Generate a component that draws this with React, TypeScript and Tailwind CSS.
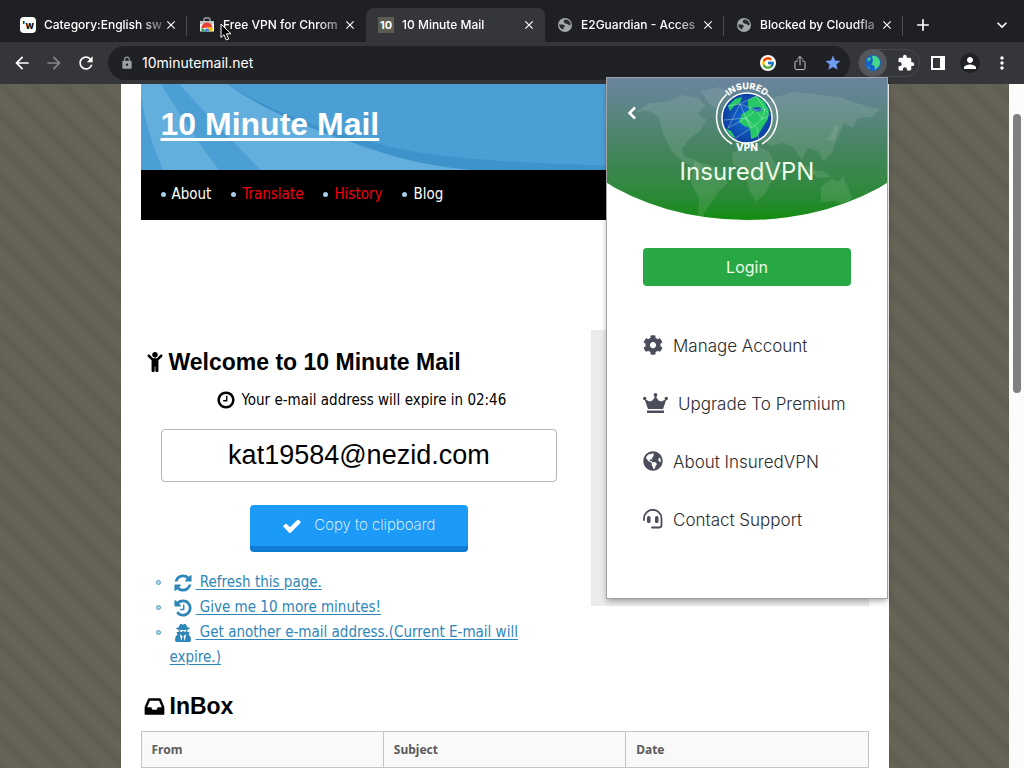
import { useState } from "react";
import type { ReactNode } from "react";
import { FaChild, FaCog, FaGlobeAmericas, FaUserSecret } from "react-icons/fa";
import { FcGoogle } from "react-icons/fc";
import { IoShareOutline } from "react-icons/io5";
import {
  MdAdd,
  MdArrowBack,
  MdArrowForward,
  MdClose,
  MdExpandMore,
  MdExtension,
  MdLock,
  MdMoreVert,
  MdPerson,
  MdRefresh,
  MdStar,
} from "react-icons/md";

type GlyphProps = { d: string; className: string };

// icons on a 1792 grid
const Glyph = ({ d, className }: GlyphProps) => (
  <svg viewBox="0 0 1792 1792" fill="currentColor" className={className} aria-hidden="true">
    <path d={d} />
  </svg>
);

const clockPath =
  "M1024 544v448q0 14-9 23t-23 9h-320q-14 0-23-9t-9-23v-64q0-14 9-23t23-9h224v-352q0-14 9-23t23-9h64q14 0 23 9t9 23zm416 352q0-148-73-273t-198-198-273-73-273 73-198 198-73 273 73 273 198 198 273 73 273-73 198-198 73-273zm224 0q0 209-103 385.5t-279.5 279.5-385.5 103-385.5-103-279.5-279.5-103-385.5 103-385.5 279.5-279.5 385.5-103 385.5 103 279.5 279.5 103 385.5z";
const checkPath =
  "M1671 566q0 40-28 68l-724 724-136 136q-28 28-68 28t-68-28l-136-136-362-362q-28-28-28-68t28-68l136-136q28-28 68-28t68 28l294 295 656-657q28-28 68-28t68 28l136 136q28 28 28 68z";
const inboxPath =
  "M1151 960h316q-1-3-2.5-8.5t-2.5-7.5l-212-496h-708l-212 496q-1 3-2.5 8.5t-2.5 7.5h316l95 192h320zm513 30v482q0 26-19 45t-45 19h-1408q-26 0-45-19t-19-45v-482q0-62 25-123l238-552q10-25 36.5-42t52.5-17h832q26 0 52.5 17t36.5 42l238 552q25 61 25 123z";
const refreshPath =
  "M1639 1056q0 5-1 7-64 268-268 434.5t-478 166.5q-146 0-282.5-55t-243.5-157l-129 129q-19 19-45 19t-45-19-19-45v-448q0-26 19-45t45-19h448q26 0 45 19t19 45-19 45l-137 137q71 66 161 102t187 36q134 0 250-65t186-179q11-17 53-117 8-23 30-23h192q13 0 22.5 9.5t9.5 22.5zm25-800v448q0 26-19 45t-45 19h-448q-26 0-45-19t-19-45 19-45l138-138q-148-137-349-137-134 0-250 65t-186 179q-11 17-53 117-8 23-30 23h-199q-13 0-22.5-9.5t-9.5-22.5v-7q65-268 270-434.5t480-166.5q146 0 284 55.5t245 156.5l130-129q19-19 45-19t45 19 19 45z";
const historyPath =
  "M1664 896q0 156-61 298t-164 245-245 164-298 61q-172 0-327-72.5t-264-204.5q-7-10-6.5-22.5t8.5-20.5l137-138q10-9 25-9 16 2 23 12 73 95 179 147t225 52q104 0 198.5-40.5t163.5-109.5 109.5-163.5 40.5-198.5-40.5-198.5-109.5-163.5-163.5-109.5-198.5-40.5q-98 0-188 35.5t-160 101.5l137 138q31 30 14 69-17 40-59 40h-448q-26 0-45-19t-19-45v-448q0-42 40-59 39-17 69 14l130 129q107-101 244.5-156.5t284.5-55.5q156 0 298 61t245 164 164 245 61 298zm-640-288v448q0 14-9 23t-23 9h-320q-14 0-23-9t-9-23v-64q0-14 9-23t23-9h224v-352q0-14 9-23t23-9h64q14 0 23 9t9 23z";

const StoreIcon = () => (
  <svg viewBox="0 0 16 16" className="size-4" aria-hidden="true">
    <path d="M5 4V2.500Q5 1 6.500 1h3Q11 1 11 2.500V4" fill="none" stroke="#9aa0a6" strokeWidth="1.400" />
    <path d="M1 4h14v10.500H1z" fill="#f1f3f4" />
    <path d="M1 4h14v3H1z" fill="#c3c7cb" />
    <path d="M2.500 11.500a5.500 5.500 0 0 1 11-1H8z" fill="#ea4335" />
    <path d="M2.500 14.500a5.500 5.500 0 0 1 .5-4l4 4z" fill="#34a853" />
    <path d="M8 10.500h5.500q.5 2.200-.5 4H8z" fill="#fbbc04" />
    <path d="M5.800 14.500a2.300 2.300 0 1 1 4.400 0z" fill="#4285f4" />
  </svg>
);

const SiteIcon = () => (
  <svg viewBox="0 0 16 16" className="size-4" aria-hidden="true">
    <circle cx="8" cy="8" r="7" fill="#a3a6aa" />
    <path d="M7 3q3-1.500 6 2 1 2 .5 3-2 .5-3-1L8 6.500Q6 5 7 3z" fill="#2b2c30" />
    <path d="M2 7.500h4q2 .5 2 2.500H6.500v2.500Q3 12 2 7.500z" fill="#2b2c30" />
  </svg>
);

type TabProps = { icon: ReactNode; title: string; active?: boolean; divider?: boolean };

const Tab = ({ icon, title, active, divider }: TabProps) => (
  <div
    className={
      active
        ? "relative flex h-full min-w-0 flex-1 items-center rounded-t-lg bg-[#35363a] pr-2 pl-3"
        : "relative flex h-full min-w-0 flex-1 items-center pr-2 pl-3"
    }
  >
    <span className="flex size-4 shrink-0 items-center justify-center">{icon}</span>
    <span className="ml-2 min-w-0 flex-1 text-xs font-medium whitespace-nowrap text-white [mask-image:linear-gradient(to_right,#000_80%,#0004)]">
      {title}
    </span>
    <button type="button" aria-label="Close tab" className="flex size-4 shrink-0 items-center justify-center text-white">
      <MdClose className="size-3.5" />
    </button>
    {divider && <span className="absolute top-2 right-0 h-5 w-px bg-[#4a4c50]" />}
  </div>
);

const TabStrip = () => (
  <div className="flex h-[42px] bg-[#1f2024] pt-2 pl-2">
    <div className="flex min-w-0 flex-[0_1_895px]">
      <Tab
        divider
        title="Category:English sw"
        icon={
          <span className="flex size-4 items-center justify-center rounded-sm bg-white text-[10px] font-bold text-black">
            &#39;w
          </span>
        }
      />
      <Tab title="Free VPN for Chrom" icon={<StoreIcon />} />
      <Tab
        active
        title="10 Minute Mail"
        icon={
          <span className="flex size-4 items-center justify-center bg-[#5d5c50] text-[11px] font-bold text-white">10</span>
        }
      />
      <Tab divider title="E2Guardian - Acces" icon={<SiteIcon />} />
      <Tab divider title="Blocked by Cloudfla" icon={<SiteIcon />} />
    </div>
    <button type="button" aria-label="New tab" className="flex w-10 items-center justify-center text-white">
      <MdAdd className="size-5" />
    </button>
    <button type="button" aria-label="Search tabs" className="mr-3 ml-auto flex w-5 items-center justify-center text-white">
      <MdExpandMore className="size-5" />
    </button>
  </div>
);

const Toolbar = () => (
  <div className="flex h-[42px] items-center bg-[#35363a] pr-3 pl-3 text-white">
    <div className="flex w-24 gap-3">
      <button type="button" aria-label="Back">
        <MdArrowBack className="size-5" />
      </button>
      <button type="button" aria-label="Forward" className="text-[#85878b]">
        <MdArrowForward className="size-5" />
      </button>
      <button type="button" aria-label="Reload">
        <MdRefresh className="size-5" />
      </button>
    </div>
    <div className="flex h-[34px] min-w-0 flex-1 items-center rounded-full bg-[#202124] pr-2 pl-3">
      <MdLock className="size-3.5 shrink-0 text-[#9aa0a6]" />
      <input
        type="text"
        aria-label="Address"
        defaultValue="10minutemail.net"
        className="ml-2 min-w-0 flex-1 bg-transparent text-sm text-white outline-none"
      />
      <div className="flex items-center gap-4">
        <span className="flex size-4 items-center justify-center rounded-full bg-white">
          <FcGoogle className="size-3.5" />
        </span>
        <button type="button" aria-label="Share" className="text-[#c4c7c9]">
          <IoShareOutline className="size-4" />
        </button>
        <button type="button" aria-label="Bookmark" className="text-[#6f9bf5]">
          <MdStar className="size-[18px]" />
        </button>
      </div>
    </div>
    <div className="ml-2 flex h-7 items-center gap-2.5 rounded-full border border-[#47484c] pr-1">
      <button type="button" aria-label="InsuredVPN" className="flex size-7 items-center justify-center rounded-full bg-[#55575b]">
        <svg viewBox="0 0 16 16" className="size-4" aria-hidden="true">
          <circle cx="8" cy="8" r="8" fill="#1663c7" />
          <path d="M7 1q5-1 7.500 4 2 5-2.500 8l-2 2-.5-4-3-1.500L8 6z" fill="#45d68a" />
          <path d="M2 4l3-2 1 2-3 3zM2 11l3 2-1 1z" fill="#3cc4a0" />
        </svg>
      </button>
      <button type="button" aria-label="Extensions">
        <MdExtension className="size-[18px]" />
      </button>
    </div>
    <button type="button" aria-label="Side panel" className="ml-2 flex size-5 items-center justify-center">
      <svg viewBox="0 0 14 14" className="size-3.5" aria-hidden="true">
        <path d="M1 1h12v12H1z" fill="none" stroke="currentColor" strokeWidth="2" />
        <path d="M9 1h4v12H9z" fill="currentColor" />
      </svg>
    </button>
    <button type="button" aria-label="Profile" className="ml-3 flex size-5 items-center justify-center rounded-full bg-[#202124]">
      <MdPerson className="size-[18px]" />
    </button>
    <button type="button" aria-label="Menu" className="ml-3 flex w-5 justify-center">
      <MdMoreVert className="size-5" />
    </button>
  </div>
);

const navLinks = [
  { label: "About", className: "text-white" },
  { label: "Translate", className: "text-[#f00010]" },
  { label: "History", className: "text-[#f00010]" },
  { label: "Blog", className: "text-white" },
];

const SiteHeader = () => (
  <header>
    <div className="relative h-[86px] overflow-hidden bg-[#4c9fd5]">
      <svg viewBox="0 0 728 86" preserveAspectRatio="none" className="absolute inset-0 size-full" aria-hidden="true">
        <path d="M0 0h20q30 50 58 86H22Q6 50 0 12z" fill="#62aedd" />
        <path d="M38 0h48q60 38 160 66 60 15 120 20H120Q80 46 38 0z" fill="#62aedd" />
        <path d="M86 0q60 38 160 62 60 16 240 20v4H330q-60-5-120-28Q130 32 86 0z" fill="#3f93cb" />
      </svg>
      <h1 className="relative px-5 pt-[18px] text-[32px] leading-11 font-bold text-white">
        <a href="#" className="underline decoration-3 underline-offset-3">
          10 Minute Mail
        </a>
      </h1>
    </div>
    <nav className="flex h-[50px] items-start gap-5 bg-black px-5 pt-3 font-['DejaVu_Sans_Condensed','Noto_Sans',sans-serif] text-[15px] leading-6">
      {navLinks.map((link) => (
        <a key={link.label} href="#" className={link.className}>
          <span className="mr-1.5 inline-block size-[5px] rounded-full bg-[#a5cbe6] align-middle" />
          {link.label}
        </a>
      ))}
    </nav>
  </header>
);

const actions = [
  { label: "Refresh this page.", icon: <Glyph d={refreshPath} className="inline size-5 align-middle" /> },
  { label: "Give me 10 more minutes!", icon: <Glyph d={historyPath} className="inline size-5 align-middle" /> },
  {
    label: "Get another e-mail address.(Current E-mail will expire.)",
    icon: <FaUserSecret className="inline h-[18px] w-5 align-middle" />,
  },
];

const MailBox = () => {
  const [address] = useState("kat19584@nezid.com");

  return (
    <section className="w-3/5">
      <h2 className="flex h-16 items-center gap-1 pl-1 text-[23px] font-bold">
        <FaChild className="size-5" />
        Welcome to 10 Minute Mail
      </h2>
      <p className="flex h-3 items-center justify-center gap-1.5 pl-1 font-['DejaVu_Sans_Condensed','Noto_Sans',sans-serif] text-[15px]">
        <Glyph d={clockPath} className="size-5" />
        Your e-mail address will expire in 02:46
      </p>
      <div className="px-5 pt-[23px]">
        <input
          type="text"
          readOnly
          aria-label="E-mail address"
          value={address}
          className="h-[53px] w-full rounded-sm border border-[#b5b5b5] bg-white text-center text-[27px] text-black"
        />
      </div>
      <button
        type="button"
        className="mx-auto mt-[23px] flex h-[47px] w-1/2 items-center justify-center gap-3 rounded-sm border-b-6 border-[#0f7bd4] bg-[#1c9af8] font-['Inter',sans-serif] text-[15px] font-extralight text-white"
      >
        <Glyph d={checkPath} className="size-5" />
        Copy to clipboard
      </button>
      <ul className="mt-[18px] pl-[29px] font-['DejaVu_Sans_Condensed','Noto_Sans',sans-serif] text-[15px] leading-[25px] text-[#2e86b9]">
        {actions.map((action) => (
          <li key={action.label} className="relative pr-12">
            <span className="absolute top-2.5 -left-3.5 size-[5px] rounded-full border border-[#4f9fc4] bg-[#b5d7e8]" />
            <a href="#" className="underline underline-offset-2">
              <span className="mx-[3px] inline-block align-top">{action.icon}</span>
              &nbsp;{action.label}
            </a>
          </li>
        ))}
      </ul>
    </section>
  );
};

const Inbox = () => (
  <section>
    <h2 className="mt-3 flex h-[49px] items-center gap-1 pl-0.5 text-[23px] font-bold">
      <Glyph d={inboxPath} className="size-[23px]" />
      InBox
    </h2>
    <table className="w-full table-fixed border-collapse border border-[#c4c4c4] font-['Noto_Sans',sans-serif] text-xs">
      <thead>
        <tr className="h-9 bg-[#f9f9f9] text-left text-[#5b5b5b]">
          {["From", "Subject", "Date"].map((column) => (
            <th key={column} className="border border-[#c4c4c4] px-2.5 font-bold">
              {column}
            </th>
          ))}
        </tr>
      </thead>
      <tbody>
        <tr className="h-9">
          <td className="border border-[#c4c4c4]" />
          <td className="border border-[#c4c4c4]" />
          <td className="border border-[#c4c4c4]" />
        </tr>
      </tbody>
    </table>
  </section>
);

const WorldMap = () => (
  <svg viewBox="0 0 280 142" className="absolute inset-0 size-full" fill="#fff" fillOpacity="0.1" aria-hidden="true">
    <path d="M28 34l14-9 20-2 12-6 18 3 6 8-7 8 9 6-7 11-10 7-8 11 2 7 10 3 9 8-3 3-16-7-12-11-9-18-4-16-9-7z" />
    <path d="M87 83l14 3 14 10 6 9-10 9-6 10-8 11-1 9-5-5 1-19-8-15z" />
    <path d="M94 13l18-4 10 5-12 17-8-5z" />
    <path d="M126 35l13-9 14 2 13-8 20-6 22 2 27 4 24 8 14 3-8 8-14 1-5 10-9-5-6 14-6 16-9 8-5-10-11-3-5 13-8-13-11-5-12 3-12-8-13 2-6-9z" />
    <path d="M125 75l20-8 16 5 9 17 6 4-11 10-7 13-9 8-7-12-4-20-12-5z" />
    <path d="M214 109l11-8 6 3 5-5 6 12 3 9-7 8-9-5-15 1z" />
    <path d="M197 86l9 6 10 1 8 6-12 1-11-6zM220 62l5-7 4-9 3 4-5 13z" />
  </svg>
);

const VpnLogo = () => (
  <svg viewBox="0 0 64 70" className="mx-auto h-[70px] w-16" aria-label="Insured VPN">
    <defs>
      <path id="logoArc" d="M5 34a27 27 0 0 1 54 0" />
      <radialGradient id="logoSea">
        <stop offset="0" stopColor="#1670d8" />
        <stop offset="1" stopColor="#0b3fa0" />
      </radialGradient>
    </defs>
    <path d="M12 12a31 31 0 0 0 5 50M52 12a31 31 0 0 1-5 50" fill="none" stroke="#fff" strokeWidth="1.500" />
    <circle cx="32" cy="36" r="25" fill="url(#logoSea)" stroke="#fff" strokeWidth="1.500" />
    <path d="M33 18l8-4 8 5 5 9-1 9-6 9-5 9-6 2-1-11-6-2-5-4 3-8 7-4-1-5z" fill="#27c765" />
    <path d="M36 26l8-1 4 3-7 2z" fill="#1257b5" />
    <path d="M13 24l7-7 7-2-2 6-6 3-4 5zM10 46l6 3 5 8-6-4z" fill="#27c765" />
    <path
      d="M13 24l12-2 16-8 9 13 5 6-8 4-10 9-6-10-6-14-12 24 18-10 11 10 2 11M25 22l16 6 9-1-3 10M31 36l10-8 6 9M9 38l22-2 5 10-15 10"
      fill="none"
      stroke="#d9fff1"
      strokeOpacity="0.6"
      strokeWidth="0.600"
    />
    <text className="fill-white font-['Inter',sans-serif] text-[9px] font-extrabold" textAnchor="middle">
      <textPath href="#logoArc" startOffset="50%">
        INSURED
      </textPath>
    </text>
    <text x="32" y="69" textAnchor="middle" className="fill-white font-['Inter',sans-serif] text-[10px] font-extrabold">
      VPN
    </text>
  </svg>
);

const CrownIcon = () => (
  <svg viewBox="0 0 25 20" fill="currentColor" className="h-5 w-[25px]" aria-hidden="true">
    <path d="M1.500 6l5 2.500 3-1L12.500 3l3 4.500 3 1 5-2.500-3.500 10H5z" />
    <path d="M4 17.500h17V20H4z" />
    <circle cx="1.700" cy="5.500" r="1.700" />
    <circle cx="12.500" cy="2" r="1.900" />
    <circle cx="23.300" cy="5.500" r="1.700" />
  </svg>
);

const SupportIcon = () => (
  <svg viewBox="0 0 20 20" className="size-5" aria-hidden="true">
    <path
      d="M1 11V9.500a8.500 8.500 0 0 1 17.500 0V16q0 2.500-2.500 2.500H9"
      fill="none"
      stroke="currentColor"
      strokeWidth="1.800"
      strokeLinecap="round"
    />
    <rect x="4" y="7" width="3.500" height="7" rx="1.500" fill="currentColor" />
    <rect x="12" y="7" width="3.500" height="7" rx="1.500" fill="currentColor" />
  </svg>
);

const menuItems = [
  { label: "Manage Account", icon: <FaCog className="size-5" /> },
  { label: "Upgrade To Premium", icon: <CrownIcon /> },
  { label: "About InsuredVPN", icon: <FaGlobeAmericas className="size-5" /> },
  { label: "Contact Support", icon: <SupportIcon /> },
];

const VpnPopup = () => (
  <aside className="absolute top-[78px] right-[137px] h-[520px] w-[280px] bg-white font-['Inter',sans-serif] shadow-[0_0_0_1px_#a3a3a3,0_3px_6px_rgba(0,0,0,0.35)]">
    <div className="relative h-[142px] bg-linear-to-b from-[#6b849f] via-[#45845f] to-[#118c0a] [clip-path:ellipse(208px_142px_at_50%_0)]">
      <WorldMap />
      <button type="button" aria-label="Back" className="absolute top-7 left-5 text-white">
        <svg viewBox="0 0 10 14" className="h-3.5 w-2.5" aria-hidden="true">
          <path d="M8 1.500L2.500 7 8 12.500" fill="none" stroke="currentColor" strokeWidth="2.500" />
        </svg>
      </button>
      <div className="relative pt-1">
        <VpnLogo />
        <h2 className="mt-1 text-center text-2xl leading-8 text-[#eefbe9]">InsuredVPN</h2>
      </div>
    </div>
    <div className="px-9 pt-7">
      <button type="button" className="h-[38px] w-full rounded-sm bg-[#27a844] text-base text-[#effbe9]">
        Login
      </button>
      <ul className="mt-8 text-[#2b2c30]">
        {menuItems.map((item) => (
          <li key={item.label}>
            <a href="#" className="flex h-[58px] items-center gap-2.5 text-[17px] font-light whitespace-nowrap">
              <span className="pb-1 text-[#4b4d5a]">{item.icon}</span>
              {item.label}
            </a>
          </li>
        ))}
      </ul>
    </div>
  </aside>
);

const Pointer = () => (
  <svg viewBox="0 0 12 18" className="absolute top-[23px] left-[220px] h-[18px] w-3" aria-hidden="true">
    <path d="M1 1v13.500l3-2.800 2.300 5.300 2.400-1-2.300-5.200H11z" fill="#000" stroke="#fff" />
  </svg>
);

const App = () => {
  return (
    <div className="relative flex h-screen flex-col overflow-hidden font-['Inter',sans-serif]">
      <TabStrip />
      <Toolbar />
      <div className="flex min-h-0 flex-1">
        <div className="min-w-0 flex-1 overflow-hidden bg-[repeating-linear-gradient(45deg,#605d51_0px,#656456_8px,#656456_14px,#605d51_22px)]">
          <main className="mx-auto min-h-full w-full max-w-3xl bg-white px-5 font-['Liberation_Sans',sans-serif] text-black">
            <SiteHeader />
            <div className="flex justify-between pt-[110px]">
              <MailBox />
              <div className="h-[276px] w-[278px] bg-[#ebebeb]" />
            </div>
            <Inbox />
          </main>
        </div>
        {/* Scrollbar */}
        <div className="w-[15px] bg-[#fcfcfa] pt-[30px] pr-[3px] pl-1">
          <div className="h-[279px] rounded-full bg-[#7f7f7f]" />
        </div>
      </div>
      <VpnPopup />
      <Pointer />
    </div>
  );
};

export default App;
